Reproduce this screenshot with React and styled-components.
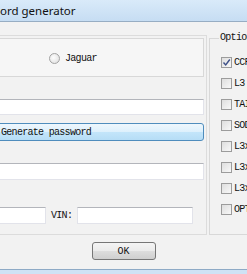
import React from 'react';
import styled, { createGlobalStyle } from 'styled-components';

const GlobalStyle = createGlobalStyle`
  html, body {
    margin: 0;
    padding: 0;
    background: #f0f0f0;
  }
`;

const OPTIONS = [
  { label: 'CCF', checked: true },
  { label: 'L3', checked: false },
  { label: 'TAI', checked: false },
  { label: 'SOD', checked: false },
  { label: 'L3x', checked: false },
  { label: 'L3x', checked: false },
  { label: 'L3x', checked: false },
  { label: 'OPT', checked: false }
];

export default function App() {
  return (
    <Window>
      <GlobalStyle />
      <TitleBar>
        <Title>ord generator</Title>
      </TitleBar>
      <Body>
        <Main>
          <LeftPanel>
            <RadioBox>
              <Radio />
              <Text>Jaguar</Text>
            </RadioBox>
            <TextInput mt={22} h={16} />
            <GenerateButton mt={8}>Generate password</GenerateButton>
            <TextInput mt={22} h={17} />
            <FieldRow>
              <TextInput h={17} />
              <Text>VIN:</Text>
              <TextInput h={17} />
            </FieldRow>
          </LeftPanel>
          <OptionsGroup>
            <Legend>Option</Legend>
            {OPTIONS.map((o, i) => (
              <OptionRow key={i}>
                <CheckBox>
                  {o.checked && (
                    <svg width='9' height='9' viewBox='0 0 9 9'>
                      <path
                        d='M1.5 4.5 L3.7 7 L7.8 1.5'
                        fill='none'
                        stroke='#3d5088'
                        strokeWidth='1.4'
                      />
                    </svg>
                  )}
                </CheckBox>
                <Text>{o.label}</Text>
              </OptionRow>
            ))}
          </OptionsGroup>
        </Main>
        <Footer>
          <OkButton>OK</OkButton>
        </Footer>
      </Body>
      <BottomEdge />
    </Window>
  );
}

const MONO = `'Liberation Mono', 'Courier New', monospace`;

const Window = styled.div`
  width: 247px;
  height: 274px;
  overflow: hidden;
  display: flex;
  flex-direction: column;
  background: #f0f0f0;
`;

const TitleBar = styled.div`
  height: 21px;
  flex-shrink: 0;
  display: flex;
  align-items: center;
  background: linear-gradient(#d9eaf9, #c6ddf3);
  border-bottom: 1px solid #97adc3;
`;

const Title = styled.span`
  font-family: 'Noto Sans', sans-serif;
  font-size: 11.5px;
  color: #111;
`;

const Body = styled.div`
  flex: 1;
  display: flex;
  flex-direction: column;
  background: #f2f2f2;
`;

const Main = styled.div`
  display: flex;
  margin-top: 11px;
`;

const LeftPanel = styled.div`
  margin-left: -4px;
  margin-top: 2px;
  width: 211px;
  flex-shrink: 0;
  box-sizing: border-box;
  display: flex;
  flex-direction: column;
  padding: 2px 2px 9px 0;
  border-top: 1px solid #dcdcdc;
  border-right: 1px solid #dcdcdc;
  border-bottom: 1px solid #dcdcdc;
`;

const Text = styled.span`
  font-family: ${MONO};
  font-size: 10px;
  letter-spacing: -0.7px;
  color: #111;
  white-space: nowrap;
  line-height: 10px;
`;

const RadioBox = styled.div`
  height: 39px;
  box-sizing: border-box;
  display: flex;
  align-items: center;
  gap: 5px;
  padding: 2px 0 0 52px;
  border: 1px solid #d8d8d8;
  background: #f6f6f6;
`;

const Radio = styled.span`
  width: 11px;
  height: 11px;
  box-sizing: border-box;
  border-radius: 50%;
  border: 1px solid #a2a2a2;
  background: radial-gradient(circle at 40% 40%, #fdfdfd, #dcdcdc);
`;

const TextInput = styled.div`
  height: ${p => p.h}px;
  margin-top: ${p => p.mt || 0}px;
  box-sizing: border-box;
  background: #fff;
  border: 1px solid #e2e3ea;
  border-top-color: #b3b5bb;
`;

const GenerateButton = styled.div`
  height: 18px;
  margin-top: ${p => p.mt}px;
  box-sizing: border-box;
  display: flex;
  align-items: center;
  padding-left: 4px;
  font-family: ${MONO};
  font-size: 10px;
  letter-spacing: -0.7px;
  color: #111;
  border: 1px solid #4f8dbd;
  border-radius: 3px;
  background: linear-gradient(#eef7fd 0%, #ddf0fc 50%, #c3e5fa 52%, #b6ddf6 100%);
`;

const FieldRow = styled.div`
  margin-top: 27px;
  display: grid;
  grid-template-columns: 50px 21px 116px;
  column-gap: 5px;
  align-items: center;
  & > span {
    margin-right: 1px;
  }
`;

const OptionsGroup = styled.fieldset`
  margin: 0 0 0 2px;
  padding: 9px 0 6px 11px;
  min-width: 60px;
  flex-shrink: 0;
  border: 1px solid #d8d8d8;
  border-right: none;
  display: flex;
  flex-direction: column;
  height: 202px;
  box-sizing: border-box;
`;

const Legend = styled.legend`
  margin-left: -2px;
  padding: 0 1px;
  font-family: ${MONO};
  font-size: 10px;
  letter-spacing: -0.7px;
  line-height: 10px;
  color: #111;
  white-space: nowrap;
`;

const OptionRow = styled.div`
  height: 21px;
  flex-shrink: 0;
  display: flex;
  align-items: center;
  gap: 2px;
  white-space: nowrap;
`;

const CheckBox = styled.span`
  width: 11px;
  height: 11px;
  flex-shrink: 0;
  box-sizing: border-box;
  display: flex;
  align-items: center;
  justify-content: center;
  border: 1px solid #9c9c9c;
  background: linear-gradient(135deg, #dedede, #f8f8f8);
`;

const Footer = styled.div`
  display: flex;
  justify-content: center;
  padding: 7px 0 9px;
`;

const OkButton = styled.div`
  width: 64px;
  height: 18px;
  box-sizing: border-box;
  display: flex;
  align-items: center;
  justify-content: center;
  font-family: ${MONO};
  font-size: 10px;
  color: #111;
  border: 1px solid #767676;
  border-radius: 3px;
  background: linear-gradient(#f4f4f4 0%, #ebebeb 50%, #dddddd 52%, #cfcfcf 100%);
`;

const BottomEdge = styled.div`
  height: 6px;
  flex-shrink: 0;
  border-top: 1px solid #8eaac6;
  background: #cfe2f5;
`;
